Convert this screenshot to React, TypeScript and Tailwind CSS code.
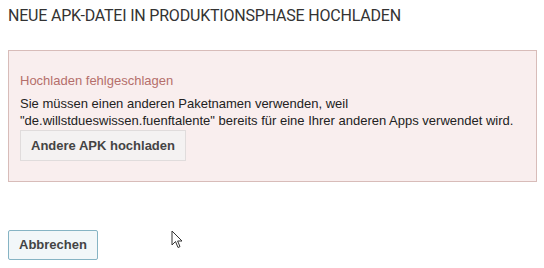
import React from 'react';

const App: React.FC = () => {
  return (
    <div className="relative w-[544px] h-[268px] bg-white overflow-hidden">
      <div className="px-2 pt-[6px]">
        <h1 className="text-[16px] leading-[20px] text-[#333] font-['Roboto',sans-serif] tracking-[-0.2px]">
          NEUE APK-DATEI IN PRODUKTIONSPHASE HOCHLADEN
        </h1>

        <div className="mt-[24px] w-[529px] h-[132px] border border-[#d8bcb9] bg-[#f9eeee] px-[11px] pt-[21px] font-['Liberation_Sans',Arial,sans-serif] text-[13px]">
          <p className="text-[#b56e6b] leading-[18px]">Hochladen fehlgeschlagen</p>
          <p className="mt-[5px] text-[#222] leading-[17px]">
            Sie müssen einen anderen Paketnamen verwenden, weil
            <br />
            "de.willstdueswissen.fuenftalente" bereits für eine Ihrer anderen Apps verwendet wird.
          </p>
          <button className="mt-[1px] h-[31px] px-[10px] border border-[#e0dcdc] bg-[#f4f2f2] text-[#444] font-bold text-[13px]">
            Andere APK hochladen
          </button>
        </div>

        <button className="mt-[48px] h-[30px] px-[10px] rounded-[2px] border border-[#86b4c4] bg-[#f2f7f9] text-[#444] font-bold text-[13px] font-['Liberation_Sans',Arial,sans-serif]">
          Abbrechen
        </button>
      </div>

      <svg className="absolute left-[171px] top-[230px]" width="13" height="20" viewBox="0 0 13 20">
        <path d="M1 1 L1 15 L4.5 11.5 L7 17.5 L9 16.6 L6.6 11 L11 11 Z" fill="#fff" stroke="#333" strokeWidth="1" />
      </svg>
    </div>
  );
};

export default App;
